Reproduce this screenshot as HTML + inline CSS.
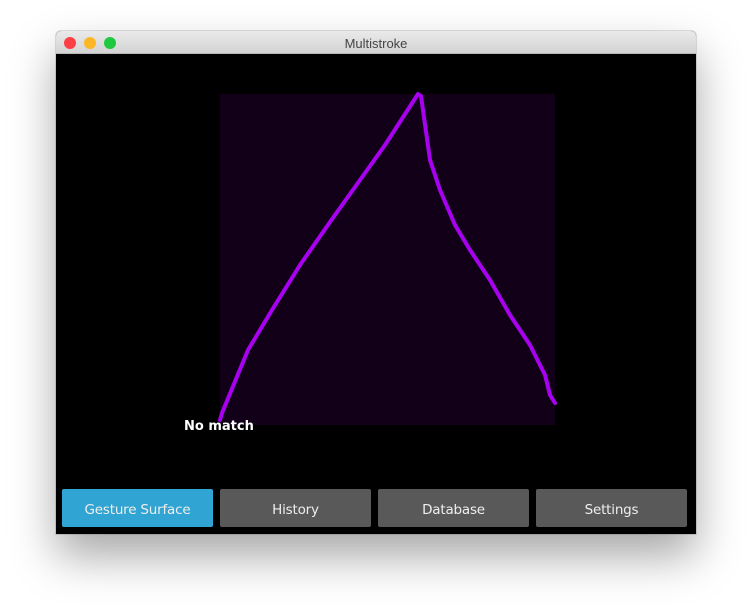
<!DOCTYPE html><html><head><style>
body{margin:0;width:752px;height:614px;background:#fff;position:relative;overflow:hidden;font-family:"DejaVu Sans","Liberation Sans",sans-serif}
.win{position:absolute;left:56px;top:31px;width:640px;height:503px;border-radius:5px 5px 0 0;box-shadow:0 22px 45px rgba(0,0,0,.35),0 0 0 1px rgba(0,0,0,.12);overflow:hidden;background:#000}
.tb{height:22px;background:linear-gradient(#ebeaeb,#d5d4d5);border-bottom:1px solid #b8b8b8;text-align:center;font:13px "Liberation Sans",sans-serif;line-height:25px;color:#444}
.d{position:absolute;top:6px;width:12px;height:12px;border-radius:50%}
.btn{position:absolute;top:458px;height:38px;width:151px;background:#595959;color:#eee;font-size:13.5px;line-height:42px;text-align:center;border-radius:2px;letter-spacing:-.2px}
</style></head><body>
<div class="win">
<div class="tb">Multistroke</div>
<div class="d" style="left:8px;background:#fc3e45"></div>
<div class="d" style="left:28px;background:#fdb625"></div>
<div class="d" style="left:48px;background:#1fc93f"></div>
<div style="position:absolute;left:164px;top:63px;width:335px;height:331px;background:#120018"></div>
<svg style="position:absolute;left:0;top:0" width="640" height="503"><polyline fill="none" stroke="#a800f0" stroke-width="4" stroke-linejoin="round" stroke-linecap="round" points="164,389 166,382 192,319 216,279 244,234 274,191 304,149 329,114 362,63 365,65 374,129 384,159 399,194 414,219 434,249 454,284 474,314 489,344 494,364 499,372"/></svg>
<div style="position:absolute;left:128px;top:388px;color:#fff;font-weight:bold;font-size:13px">No match</div>
<div class="btn" style="left:6px;background:#30a4d2">Gesture Surface</div>
<div class="btn" style="left:164px">History</div>
<div class="btn" style="left:322px">Database</div>
<div class="btn" style="left:480px">Settings</div>
</div>
</body></html>
